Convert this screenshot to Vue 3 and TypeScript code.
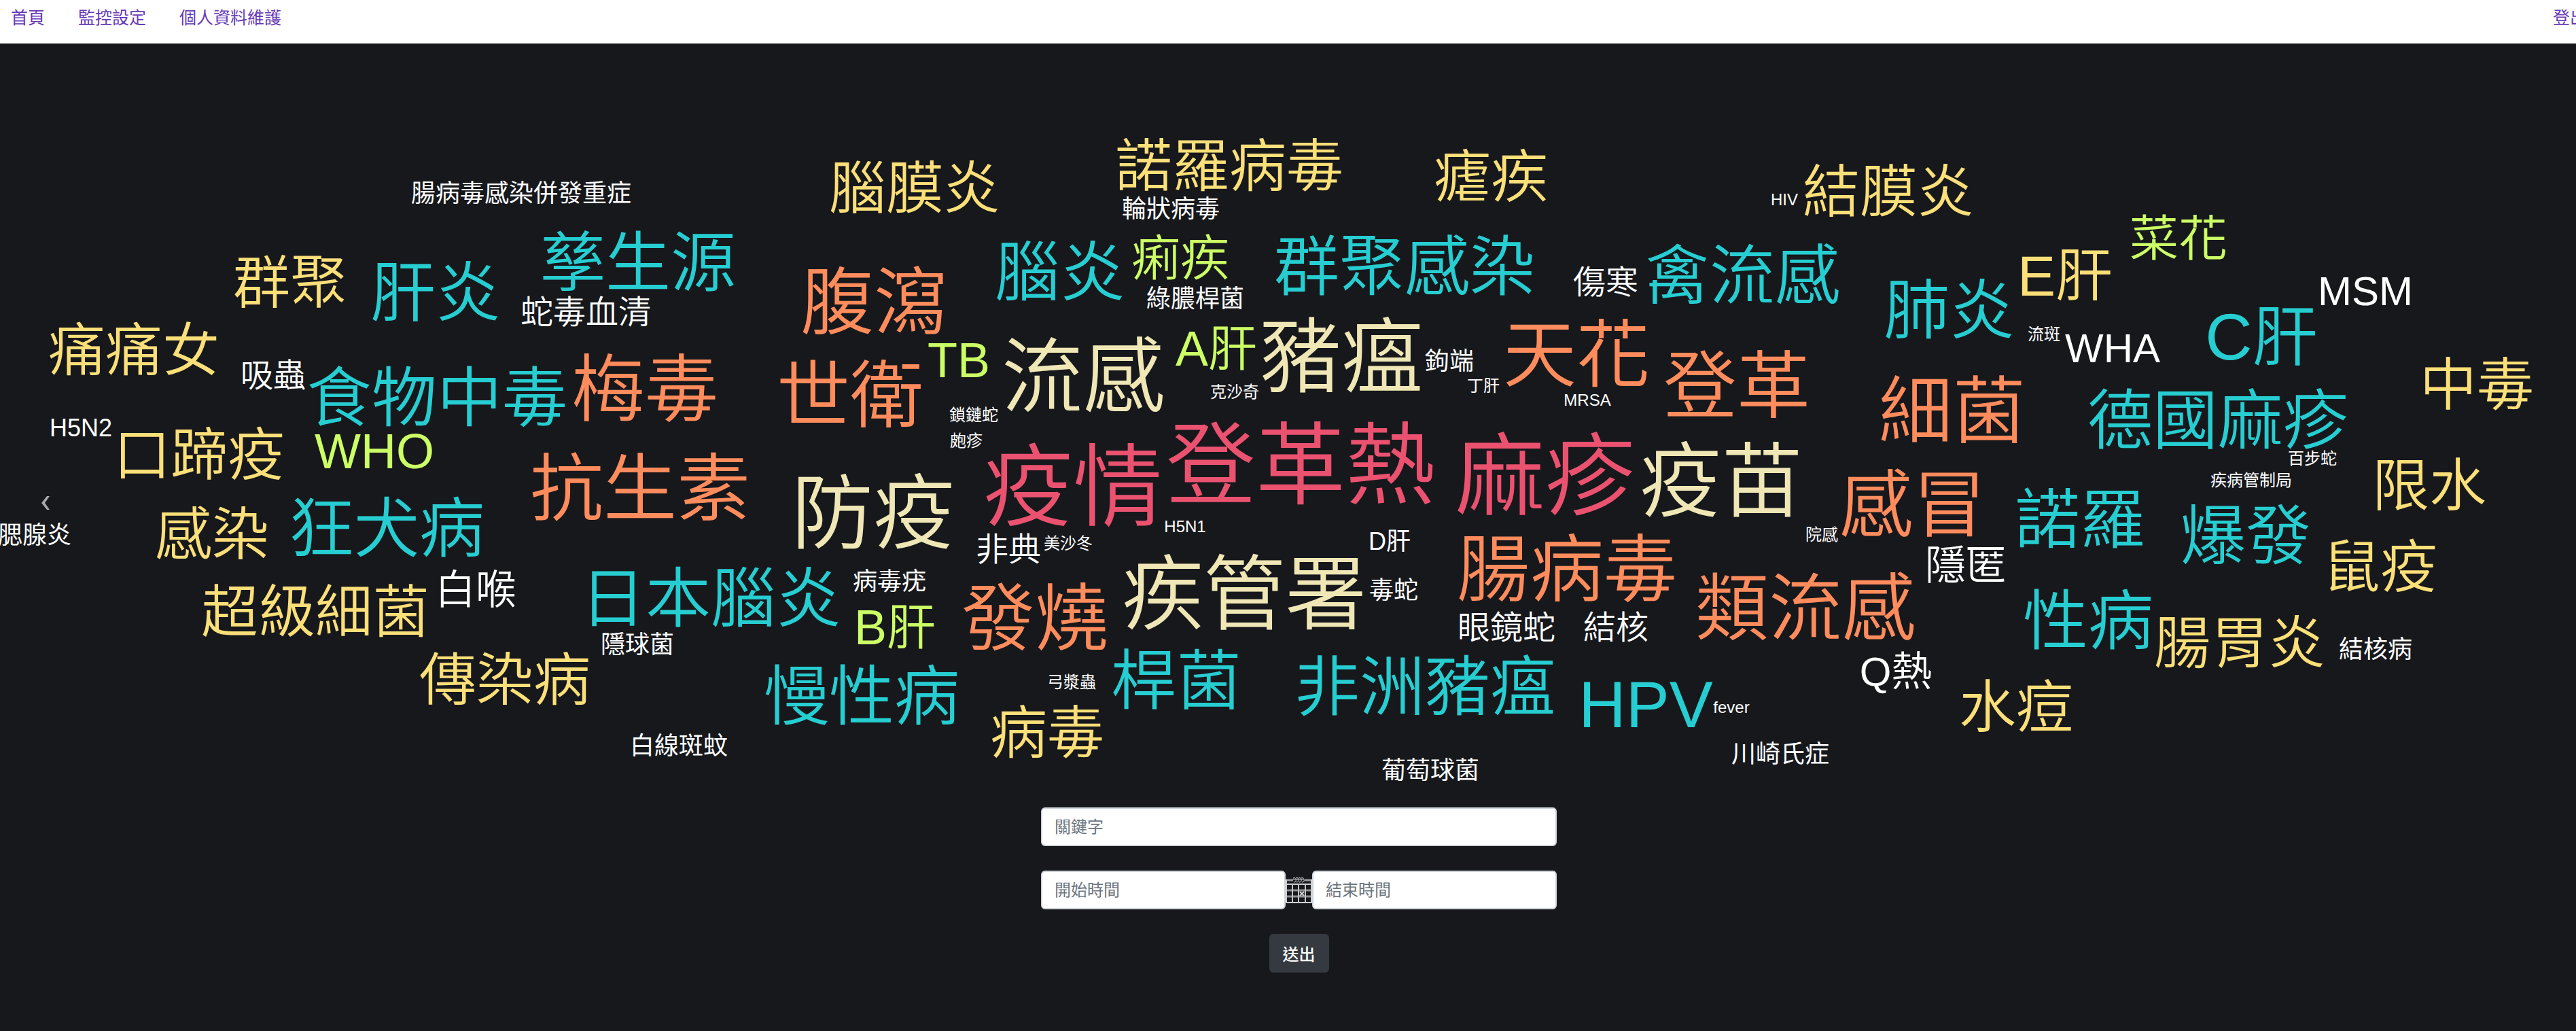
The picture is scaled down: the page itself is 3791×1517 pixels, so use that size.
<script setup lang="ts">
import { ref } from 'vue'

type Tone = 'white' | 'green' | 'yellow' | 'teal' | 'orange' | 'cream' | 'pink'
type Size = 24 | 36 | 48 | 60 | 72 | 84 | 96 | 108 | 120 | 132
type Word = [text: string, x: number, y: number, size: Size, tone: Tone]

// Word centres, measured on a stage of this width
const STAGE_WIDTH = 3823

const words: Word[] = [
  ['疫情', 1579, 650, 132, 'pink'],
  ['登革熱', 1914, 618, 132, 'pink'],
  ['麻疹', 2274, 634, 132, 'pink'],

  ['流感', 1594, 487, 120, 'cream'],
  ['豬瘟', 1974, 458, 120, 'cream'],
  ['防疫', 1285, 688, 120, 'cream'],
  ['疫苗', 2533, 641, 120, 'cream'],
  ['疾管署', 1831, 807, 120, 'cream'],

  ['梅毒', 949, 507, 108, 'orange'],
  ['抗生素', 942, 653, 108, 'orange'],
  ['腹瀉', 1286, 379, 108, 'orange'],
  ['世衛', 1251, 516, 108, 'orange'],
  ['發燒', 1523, 844, 108, 'orange'],
  ['天花', 2320, 456, 108, 'orange'],
  ['登革', 2556, 502, 108, 'orange'],
  ['腸病毒', 2306, 772, 108, 'orange'],
  ['類流感', 2657, 829, 108, 'orange'],
  ['細菌', 2873, 539, 108, 'orange'],
  ['感冒', 2815, 677, 108, 'orange'],

  ['肝炎', 641, 364, 96, 'teal'],
  ['孳生源', 939, 320, 96, 'teal'],
  ['食物中毒', 643, 519, 96, 'teal'],
  ['狂犬病', 569, 711, 96, 'teal'],
  ['日本腦炎', 1046, 814, 96, 'teal'],
  ['腦炎', 1560, 334, 96, 'teal'],
  ['慢性病', 1268, 958, 96, 'teal'],
  ['桿菌', 1731, 935, 96, 'teal'],
  ['群聚感染', 2067, 326, 96, 'teal'],
  ['禽流感', 2564, 339, 96, 'teal'],
  ['非洲豬瘟', 2097, 944, 96, 'teal'],
  ['HPV', 2422, 970, 96, 'teal'],
  ['肺炎', 2869, 390, 96, 'teal'],
  ['C肝', 3328, 429, 96, 'teal'],
  ['德國麻疹', 3264, 552, 96, 'teal'],
  ['諾羅', 3061, 698, 96, 'teal'],
  ['爆發', 3305, 722, 96, 'teal'],
  ['性病', 3073, 847, 96, 'teal'],

  ['群聚', 427, 350, 84, 'yellow'],
  ['痛痛女', 197, 449, 84, 'yellow'],
  ['口蹄疫', 293, 603, 84, 'yellow'],
  ['感染', 312, 720, 84, 'yellow'],
  ['超級細菌', 464, 834, 84, 'yellow'],
  ['傳染病', 743, 934, 84, 'yellow'],
  ['腦膜炎', 1346, 211, 84, 'yellow'],
  ['諾羅病毒', 1809, 178, 84, 'yellow'],
  ['病毒', 1541, 1012, 84, 'yellow'],
  ['瘧疾', 2194, 194, 84, 'yellow'],
  ['結膜炎', 2779, 216, 84, 'yellow'],
  ['E肝', 3039, 339, 84, 'yellow'],
  ['中毒', 3645, 500, 84, 'yellow'],
  ['限水', 3575, 648, 84, 'yellow'],
  ['鼠疫', 3503, 768, 84, 'yellow'],
  ['腸胃炎', 3296, 880, 84, 'yellow'],
  ['水痘', 2967, 974, 84, 'yellow'],

  ['WHO', 551, 598, 72, 'green'],
  ['痢疾', 1737, 314, 72, 'green'],
  ['TB', 1411, 464, 72, 'green'],
  ['A肝', 1790, 447, 72, 'green'],
  ['B肝', 1317, 857, 72, 'green'],
  ['菜花', 3206, 285, 72, 'green'],

  ['白喉', 700, 803, 60, 'white'],
  ['Q熱', 2790, 923, 60, 'white'],
  ['MSM', 3481, 363, 60, 'white'],
  ['WHA', 3109, 447, 60, 'white'],
  ['隱匿', 2893, 767, 60, 'white'],

  ['蛇毒血清', 862, 395, 48, 'white'],
  ['吸蟲', 402, 488, 48, 'white'],
  ['非典', 1484, 744, 48, 'white'],
  ['傷寒', 2363, 351, 48, 'white'],
  ['眼鏡蛇', 2217, 859, 48, 'white'],
  ['結核', 2378, 859, 48, 'white'],

  ['腸病毒感染併發重症', 767, 220, 36, 'white'],
  ['H5N2', 119, 565, 36, 'white'],
  ['腮腺炎', 51, 723, 36, 'white'],
  ['隱球菌', 938, 884, 36, 'white'],
  ['白線斑蚊', 999, 1033, 36, 'white'],
  ['輪狀病毒', 1723, 243, 36, 'white'],
  ['綠膿桿菌', 1759, 375, 36, 'white'],
  ['病毒疣', 1309, 791, 36, 'white'],
  ['鉤端', 2133, 467, 36, 'white'],
  ['D肝', 2045, 732, 36, 'white'],
  ['毒蛇', 2051, 804, 36, 'white'],
  ['川崎氏症', 2620, 1045, 36, 'white'],
  ['葡萄球菌', 2105, 1069, 36, 'white'],
  ['結核病', 3496, 891, 36, 'white'],

  ['克沙奇', 1817, 512, 24, 'white'],
  ['鎖鏈蛇', 1433, 546, 24, 'white'],
  ['皰疹', 1422, 584, 24, 'white'],
  ['H5N1', 1744, 710, 24, 'white'],
  ['美沙冬', 1572, 735, 24, 'white'],
  ['弓漿蟲', 1577, 939, 24, 'white'],
  ['HIV', 2626, 229, 24, 'white'],
  ['丁肝', 2183, 503, 24, 'white'],
  ['MRSA', 2336, 524, 24, 'white'],
  ['院感', 2681, 722, 24, 'white'],
  ['fever', 2548, 976, 24, 'white'],
  ['流斑', 3008, 427, 24, 'white'],
  ['百步蛇', 3403, 610, 24, 'white'],
  ['疾病管制局', 3313, 642, 24, 'white'],
]

const place = (x: number, y: number) => ({
  left: `${(x / STAGE_WIDTH) * 100}%`,
  top: `${y}px`,
})

const keyword = ref('')
const startTime = ref('')
const endTime = ref('')
</script>

<template>
  <div class="viewport">
    <div class="page">
      <nav class="nav">
        <a href="#home">首頁</a>
        <a href="#monitor">監控設定</a>
        <a href="#profile">個人資料維護</a>
        <a href="#logout" class="logout">登出</a>
      </nav>

      <main class="main">
        <section class="cloud">
          <span
            v-for="[text, x, y, size, tone] in words"
            :key="text"
            class="word"
            :class="[`size-${size}`, tone]"
            :style="place(x, y)"
          >{{ text }}</span>
          <button type="button" class="prev" aria-label="上一頁">
            <svg width="14" height="22" viewBox="0 0 14 22">
              <path d="M9 1h4L6 11l7 10H9L1 11z" fill="#a8a9aa" />
            </svg>
          </button>
        </section>

        <form class="search" @submit.prevent>
          <input v-model="keyword" type="text" placeholder="關鍵字" aria-label="關鍵字" />
          <div class="range">
            <input v-model="startTime" type="text" placeholder="開始時間" aria-label="開始時間" />
            <svg class="calendar" viewBox="0 0 39 40" fill="none">
              <path d="M1 20h38M1 29h38" stroke="#8e9092" stroke-width="3" />
              <path d="M1 5h10M28 5h11" stroke="#9a9c9e" stroke-width="3" />
              <path d="M1 11h38M1 38h38M1 4v34M38 4v34" stroke="#cfd0d2" stroke-width="2" />
              <path d="M10 11v27M19 11v27M29 11v27" stroke="#c2c4c6" stroke-width="2" />
              <g stroke="#d4d5d6" stroke-width="1">
                <path d="M11 2q3-2 4 2t-3 4M15 2q3-2 4 2t-3 4M19 2q3-2 4 2t-3 4M23 2q3-2 4 2t-3 4" />
                <path d="M11 4h3M15 4h3M19 4h3M23 4h3" />
                <path d="M21 22l6 6M27 22l-6 6" stroke-width="2" />
              </g>
            </svg>
            <input v-model="endTime" type="text" placeholder="結束時間" aria-label="結束時間" />
          </div>
          <button type="submit" class="submit">送出</button>
        </form>
      </main>
    </div>
  </div>
</template>

<style>
body {
  margin: 0;
  background: #17181c;
}
</style>

<style scoped>
.viewport {
  overflow: hidden;
  font-family: "Liberation Sans", "Noto Sans CJK TC", sans-serif;
}

.page {
  width: calc(100% + 32px);
  min-height: 100vh;
  display: flex;
  flex-direction: column;
}

.nav {
  display: flex;
  gap: 49px;
  padding: 7px 16px 19px;
  background: #fff;
  font-size: 25px;
  line-height: 38px;
}

.nav a {
  color: #673ab7;
  text-decoration: none;
}

.nav .logout {
  margin-left: auto;
}

.main {
  flex: 1;
  background: #17181c;
}

.cloud {
  position: relative;
  height: 1124px;
}

.word {
  position: absolute;
  transform: translate(-50%, -47%);
  font-weight: 350;
  line-height: 1;
  white-space: nowrap;
}

.size-24 { font-size: 24px; font-weight: 400; }
.size-36 { font-size: 36px; font-weight: 400; }
.size-48 { font-size: 48px; }
.size-60 { font-size: 60px; }
.size-72 { font-size: 72px; }
.size-84 { font-size: 84px; }
.size-96 { font-size: 96px; }
.size-108 { font-size: 108px; }
.size-120 { font-size: 120px; }
.size-132 { font-size: 132px; }

.white { color: #fff; }
.green { color: #ccff66; }
.yellow { color: #fbdf78; }
.teal { color: #26ced2; }
.orange { color: #ff8c5c; }
.cream { color: #f0e7b6; }
.pink { color: #ea5270; }

.prev {
  position: absolute;
  left: 60px;
  top: 665px;
  display: flex;
  padding: 0;
  border: 0;
  background: none;
}

.search {
  display: flex;
  flex-direction: column;
  align-items: center;
  gap: 36px;
  width: 759px;
  max-width: 100%;
  margin: 0 auto;
  padding-bottom: 86px;
}

.search input {
  box-sizing: border-box;
  width: 100%;
  height: 57px;
  padding: 0 18px;
  border: 2px solid #ced4da;
  border-radius: 6px;
  background: #fff;
  color: #495057;
  font: inherit;
  font-size: 24px;
}

.search input::placeholder {
  color: #6c757d;
  opacity: 1;
}

.range {
  display: flex;
  align-items: center;
  width: 100%;
}

.range input {
  flex: 1;
  min-width: 0;
}

.calendar {
  flex: none;
  width: 39px;
  height: 40px;
}

.submit {
  height: 57px;
  padding: 0 20px;
  border: 0;
  border-radius: 6px;
  background: #343a40;
  color: #fff;
  font: inherit;
  font-size: 24px;
  font-weight: 500;
}
</style>
